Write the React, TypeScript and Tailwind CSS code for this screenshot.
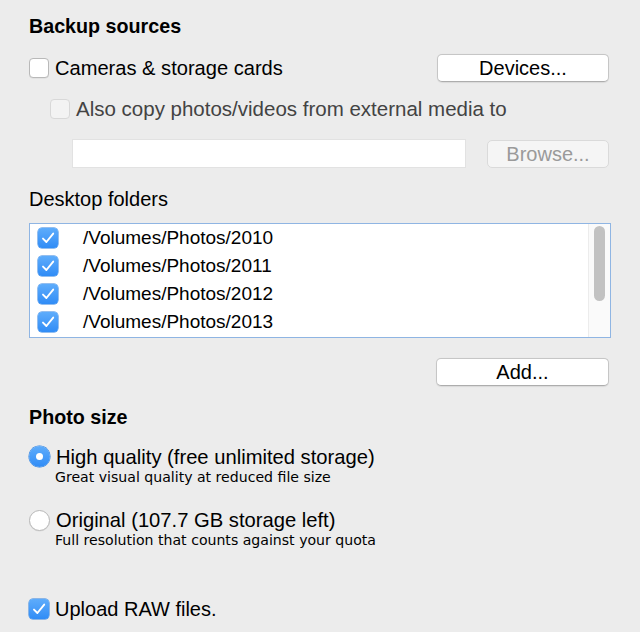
import React from "react";

function CheckMark() {
  return (
    <svg width="20" height="20" viewBox="0 0 20 20" className="block">
      <path d="M5 10.6 L8.4 14 L15.2 5.6" fill="none" stroke="#ffffff" strokeWidth="1.9" strokeLinecap="round" strokeLinejoin="round" />
    </svg>
  );
}

function Checkbox({ checked = false, disabled = false }: { checked?: boolean; disabled?: boolean }) {
  if (checked) {
    return (
      <div className="w-[20px] h-[20px] shrink-0 rounded-[4px] bg-linear-to-b from-[#5eacfb] to-[#2f8cf6] shadow-[0_0_0_0.5px_#2a7fe0]">
        <CheckMark />
      </div>
    );
  }
  if (disabled) {
    return <div className="w-[20px] h-[20px] shrink-0 rounded-[4px] bg-[#f3f3f3] border border-[#d8d8d8]" />;
  }
  return <div className="w-[20px] h-[20px] shrink-0 rounded-[4px] bg-white border border-[#b9b9b9] shadow-[0_0.5px_0.5px_rgba(0,0,0,0.08)]" />;
}

function Radio({ checked = false }: { checked?: boolean }) {
  if (checked) {
    return (
      <div className="w-[21px] h-[21px] shrink-0 rounded-full bg-linear-to-b from-[#5eacfb] to-[#2f8cf6] shadow-[0_0_0_0.5px_#2a7fe0] flex items-center justify-center">
        <div className="w-[7px] h-[7px] rounded-full bg-white" />
      </div>
    );
  }
  return <div className="w-[21px] h-[21px] shrink-0 rounded-full bg-white border border-[#b9b9b9] shadow-[0_0.5px_0.5px_rgba(0,0,0,0.08)]" />;
}

function Button({ label, width, disabled = false }: { label: string; width: string; disabled?: boolean }) {
  return (
    <div
      className={
        disabled
          ? `${width} h-[28px] shrink-0 rounded-[5px] bg-[#f5f5f5] border border-[#dadada] flex items-center justify-center text-[20px] text-[#9a9a9a]`
          : `${width} h-[28px] shrink-0 rounded-[5px] bg-white border border-[#c6c6c6] border-b-[#adadad] shadow-[0_0.5px_1px_rgba(0,0,0,0.08)] flex items-center justify-center text-[20px] text-black`
      }
    >
      {label}
    </div>
  );
}

const folders = ["/Volumes/Photos/2010", "/Volumes/Photos/2011", "/Volumes/Photos/2012", "/Volumes/Photos/2013"];

export default function App() {
  return (
    <div className="w-[640px] h-[632px] overflow-hidden bg-[#ececec] font-['Liberation_Sans',Arial,sans-serif] text-black pl-[29px] flex flex-col">
      <div className="mt-[14px] h-[24px] leading-[24px] text-[19.7px] font-bold">Backup sources</div>

      <div className="mt-[16px] h-[28px] flex items-center w-[580px]">
        <Checkbox />
        <span className="ml-[6px] text-[20.1px] leading-[24px]">Cameras &amp; storage cards</span>
        <div className="flex-1" />
        <Button label="Devices..." width="w-[172px]" />
      </div>

      <div className="mt-[13px] h-[28px] flex items-center ml-[21px]">
        <Checkbox disabled />
        <span className="ml-[6px] text-[20.5px] leading-[24px] text-[#434343]">Also copy photos/videos from external media to</span>
      </div>

      <div className="mt-[16px] h-[29px] flex items-center w-[580px]">
        <div className="ml-[43px] w-[394px] h-[29px] bg-white border border-[#e2e2e2]" />
        <div className="flex-1" />
        <Button label="Browse..." width="w-[122px]" disabled />
      </div>

      <div className="mt-[19px] h-[24px] leading-[24px] text-[20px]">Desktop folders</div>

      <div className="mt-[12px] w-[582px] h-[115px] bg-white border border-[#8fb5e3] flex">
        <div className="flex-1 flex flex-col">
          {folders.map((f) => (
            <div key={f} className="h-[28px] flex items-center pl-[8px]">
              <Checkbox checked />
              <span className="ml-[25px] text-[19px] leading-[24px]">{f}</span>
            </div>
          ))}
        </div>
        <div className="w-[22px] h-full bg-[#fafafa] border-l border-[#ececec] flex justify-center pt-[2px]">
          <div className="w-[11px] h-[75px] rounded-full bg-[#c2c2c2]" />
        </div>
      </div>

      <div className="mt-[20px] ml-[407px]">
        <Button label="Add..." width="w-[173px]" />
      </div>

      <div className="mt-[19px] h-[24px] leading-[24px] text-[19.7px] font-bold">Photo size</div>

      <div className="mt-[16.5px] flex items-start">
        <div className="mt-[0.5px]">
          <Radio checked />
        </div>
        <div className="ml-[6px] flex flex-col">
          <span className="text-[20.2px] leading-[22px]">High quality (free unlimited storage)</span>
          <span className="-ml-[1px] font-['DejaVu_Sans',sans-serif] text-[14.1px] leading-[18px]">Great visual quality at reduced file size</span>
        </div>
      </div>

      <div className="mt-[23.5px] flex items-start">
        <div className="mt-[0.5px]">
          <Radio />
        </div>
        <div className="ml-[6px] flex flex-col">
          <span className="text-[20.2px] leading-[22px]">Original (107.7 GB storage left)</span>
          <span className="-ml-[1px] font-['DejaVu_Sans',sans-serif] text-[14.1px] leading-[18px]">Full resolution that counts against your quota</span>
        </div>
      </div>

      <div className="mt-[46px] h-[28px] flex items-center">
        <Checkbox checked />
        <span className="ml-[6px] text-[20px] leading-[24px]">Upload RAW files.</span>
      </div>
    </div>
  );
}
